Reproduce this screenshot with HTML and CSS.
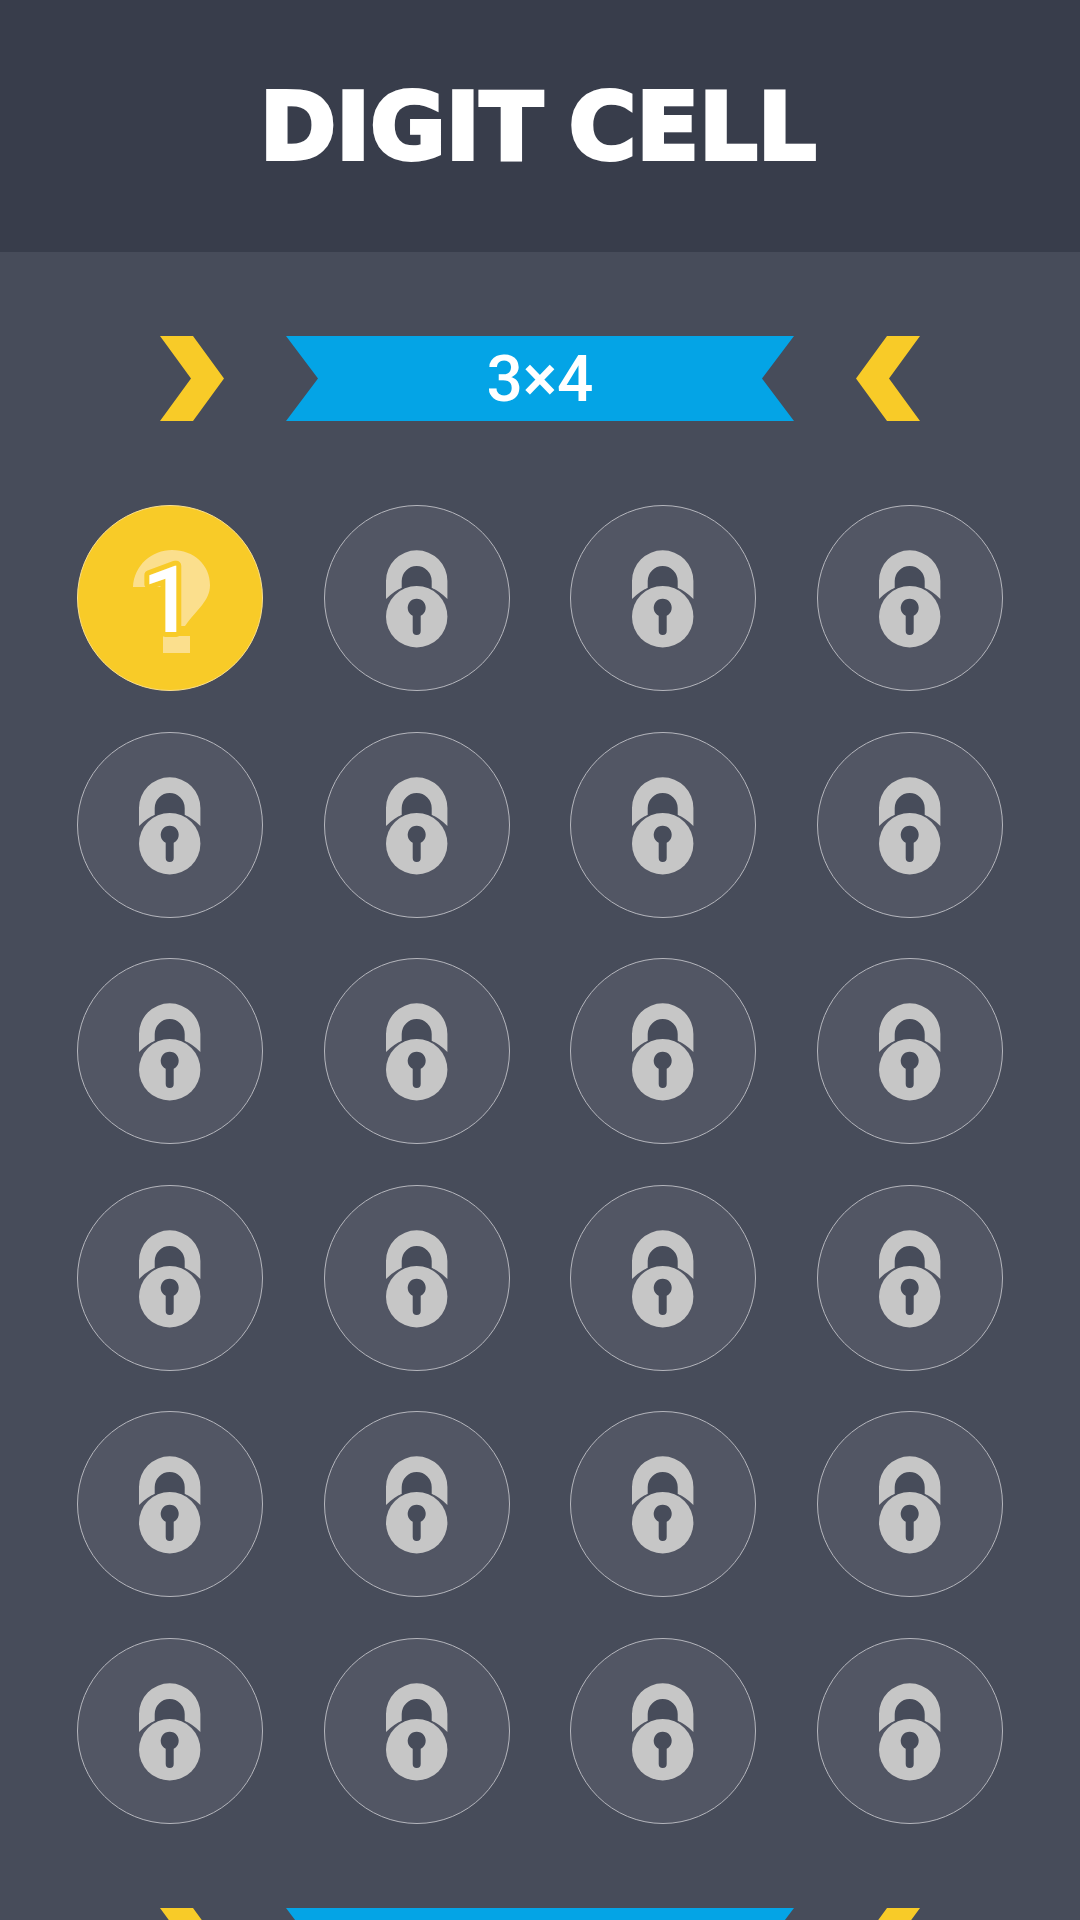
FILE: index.html
```html
<!DOCTYPE html>
<html lang="en">
<head>
    <meta charset="UTF-8">
    <meta name="viewport" content="width=device-width, initial-scale=1.0">
    <title>Digit Cell</title>
    <link rel="stylesheet" href="styles.css">
</head>
<body>
    <svg class="defs" width="0" height="0">
        <symbol id="lock" viewBox="0 0 186 186">
            <path class="lock-metal" d="M62 94V76a30.7 30.7 0 0 1 61.4 0V94Q115.5 86 107.7 83H77.7Q70 86 62 94z"/>
            <circle class="lock-gap" cx="92.7" cy="111.7" r="32.4"/>
            <path class="lock-hole" d="M77.7 76a15 15 0 0 1 30 0V92H77.7z"/>
            <circle class="lock-metal" cx="92.7" cy="111.7" r="30.7"/>
            <path class="lock-hole" d="M88.7 110.8A9 9 0 1 1 96.7 110.8V126a4 4 0 0 1-8 0z"/>
        </symbol>
    </svg>

    <header class="top-bar">
        <h1>DIGIT CELL</h1>
    </header>

    <main class="levels">
        <section class="level-group">
            <div class="banner-row">
                <span class="chevron chevron-right"></span>
                <div class="banner">3×4</div>
                <span class="chevron chevron-left"></span>
            </div>
            <div class="cell-grid">
                <button class="cell cell-open">
                    <svg class="cell-icon" viewBox="0 0 186 186">
                        <path class="hint" d="M56 82C57 60 75 45 95 45C117 45 133 60 133 80C133 96 120 104 108 121H88V82zM86 131h27v17H86z"/>
                        <text class="cell-num" x="91" y="127">1</text>
                    </svg>
                </button>
                <button class="cell"><svg class="cell-icon"><use href="#lock"/></svg></button>
                <button class="cell"><svg class="cell-icon"><use href="#lock"/></svg></button>
                <button class="cell"><svg class="cell-icon"><use href="#lock"/></svg></button>
                <button class="cell"><svg class="cell-icon"><use href="#lock"/></svg></button>
                <button class="cell"><svg class="cell-icon"><use href="#lock"/></svg></button>
                <button class="cell"><svg class="cell-icon"><use href="#lock"/></svg></button>
                <button class="cell"><svg class="cell-icon"><use href="#lock"/></svg></button>
                <button class="cell"><svg class="cell-icon"><use href="#lock"/></svg></button>
                <button class="cell"><svg class="cell-icon"><use href="#lock"/></svg></button>
                <button class="cell"><svg class="cell-icon"><use href="#lock"/></svg></button>
                <button class="cell"><svg class="cell-icon"><use href="#lock"/></svg></button>
                <button class="cell"><svg class="cell-icon"><use href="#lock"/></svg></button>
                <button class="cell"><svg class="cell-icon"><use href="#lock"/></svg></button>
                <button class="cell"><svg class="cell-icon"><use href="#lock"/></svg></button>
                <button class="cell"><svg class="cell-icon"><use href="#lock"/></svg></button>
                <button class="cell"><svg class="cell-icon"><use href="#lock"/></svg></button>
                <button class="cell"><svg class="cell-icon"><use href="#lock"/></svg></button>
                <button class="cell"><svg class="cell-icon"><use href="#lock"/></svg></button>
                <button class="cell"><svg class="cell-icon"><use href="#lock"/></svg></button>
                <button class="cell"><svg class="cell-icon"><use href="#lock"/></svg></button>
                <button class="cell"><svg class="cell-icon"><use href="#lock"/></svg></button>
                <button class="cell"><svg class="cell-icon"><use href="#lock"/></svg></button>
                <button class="cell"><svg class="cell-icon"><use href="#lock"/></svg></button>
            </div>
        </section>

        <section class="level-group">
            <div class="banner-row">
                <span class="chevron chevron-right"></span>
                <div class="banner"></div>
                <span class="chevron chevron-left"></span>
            </div>
        </section>
    </main>
</body>
</html>
```

FILE: styles.css
```css
html, body {
    height: 1920px;
    overflow: hidden;
}
body {
    margin: 0;
    background-color: #474c5a;
    font-family: 'Roboto', sans-serif;
}
.defs {
    position: absolute;
}
.top-bar {
    height: 252px;
    background-color: #383d4b;
    display: flex;
    align-items: center;
    justify-content: center;
}
.top-bar h1 {
    margin: 0;
    padding: 3px 4px 0 0;
    color: #fff;
    font-family: 'DejaVu Sans', sans-serif;
    font-size: 92px;
    font-weight: bold;
    line-height: 1;
    word-spacing: -6px;
    -webkit-text-stroke: 4px #fff;
}
.levels {
    display: flex;
    flex-direction: column;
    gap: 84px;
    padding: 84px 77px 0;
}
.banner-row {
    display: flex;
    justify-content: center;
    gap: 62px;
    height: 85px;
}
.banner {
    width: 508px;
    display: flex;
    align-items: center;
    justify-content: center;
    padding-top: 2px;
    box-sizing: border-box;
    background-color: #04a4e6;
    color: #fff;
    font-size: 64px;
    font-weight: 500;
    clip-path: polygon(0 0, 100% 0, calc(100% - 32px) 50%, 100% 100%, 0 100%, 32px 50%);
}
.chevron {
    width: 64px;
    background-color: #f8cb28;
}
.chevron-right {
    clip-path: polygon(0 0, 33px 0, 100% 50%, 33px 100%, 0 100%, 31px 50%);
}
.chevron-left {
    clip-path: polygon(31px 0, 100% 0, 33px 50%, 100% 100%, 31px 100%, 0 50%);
}
.cell-grid {
    display: grid;
    grid-template-columns: repeat(4, 186px);
    justify-content: space-between;
    row-gap: 40.6px;
    margin-top: 84px;
}
.cell {
    width: 186px;
    height: 186px;
    padding: 0;
    border: 1px solid #b5b6bd;
    border-radius: 50%;
    background-color: #525664;
    box-sizing: border-box;
    overflow: hidden;
}
.cell-open {
    border-color: #fbdf8d;
    background-color: #f8cb28;
}
.cell-icon {
    display: block;
    width: 186px;
    height: 186px;
    margin: -1px;
}
.lock-metal {
    fill: #c6c6c6;
}
.lock-gap {
    fill: #525664;
}
.lock-hole {
    fill: #474c5a;
}
.hint {
    fill: #fbdf8d;
}
.cell-num {
    fill: #fff;
    stroke: #f8cb28;
    stroke-width: 10px;
    stroke-linejoin: round;
    paint-order: stroke;
    font-family: 'Roboto', sans-serif;
    font-size: 92px;
    font-weight: 500;
    text-anchor: middle;
}
```
